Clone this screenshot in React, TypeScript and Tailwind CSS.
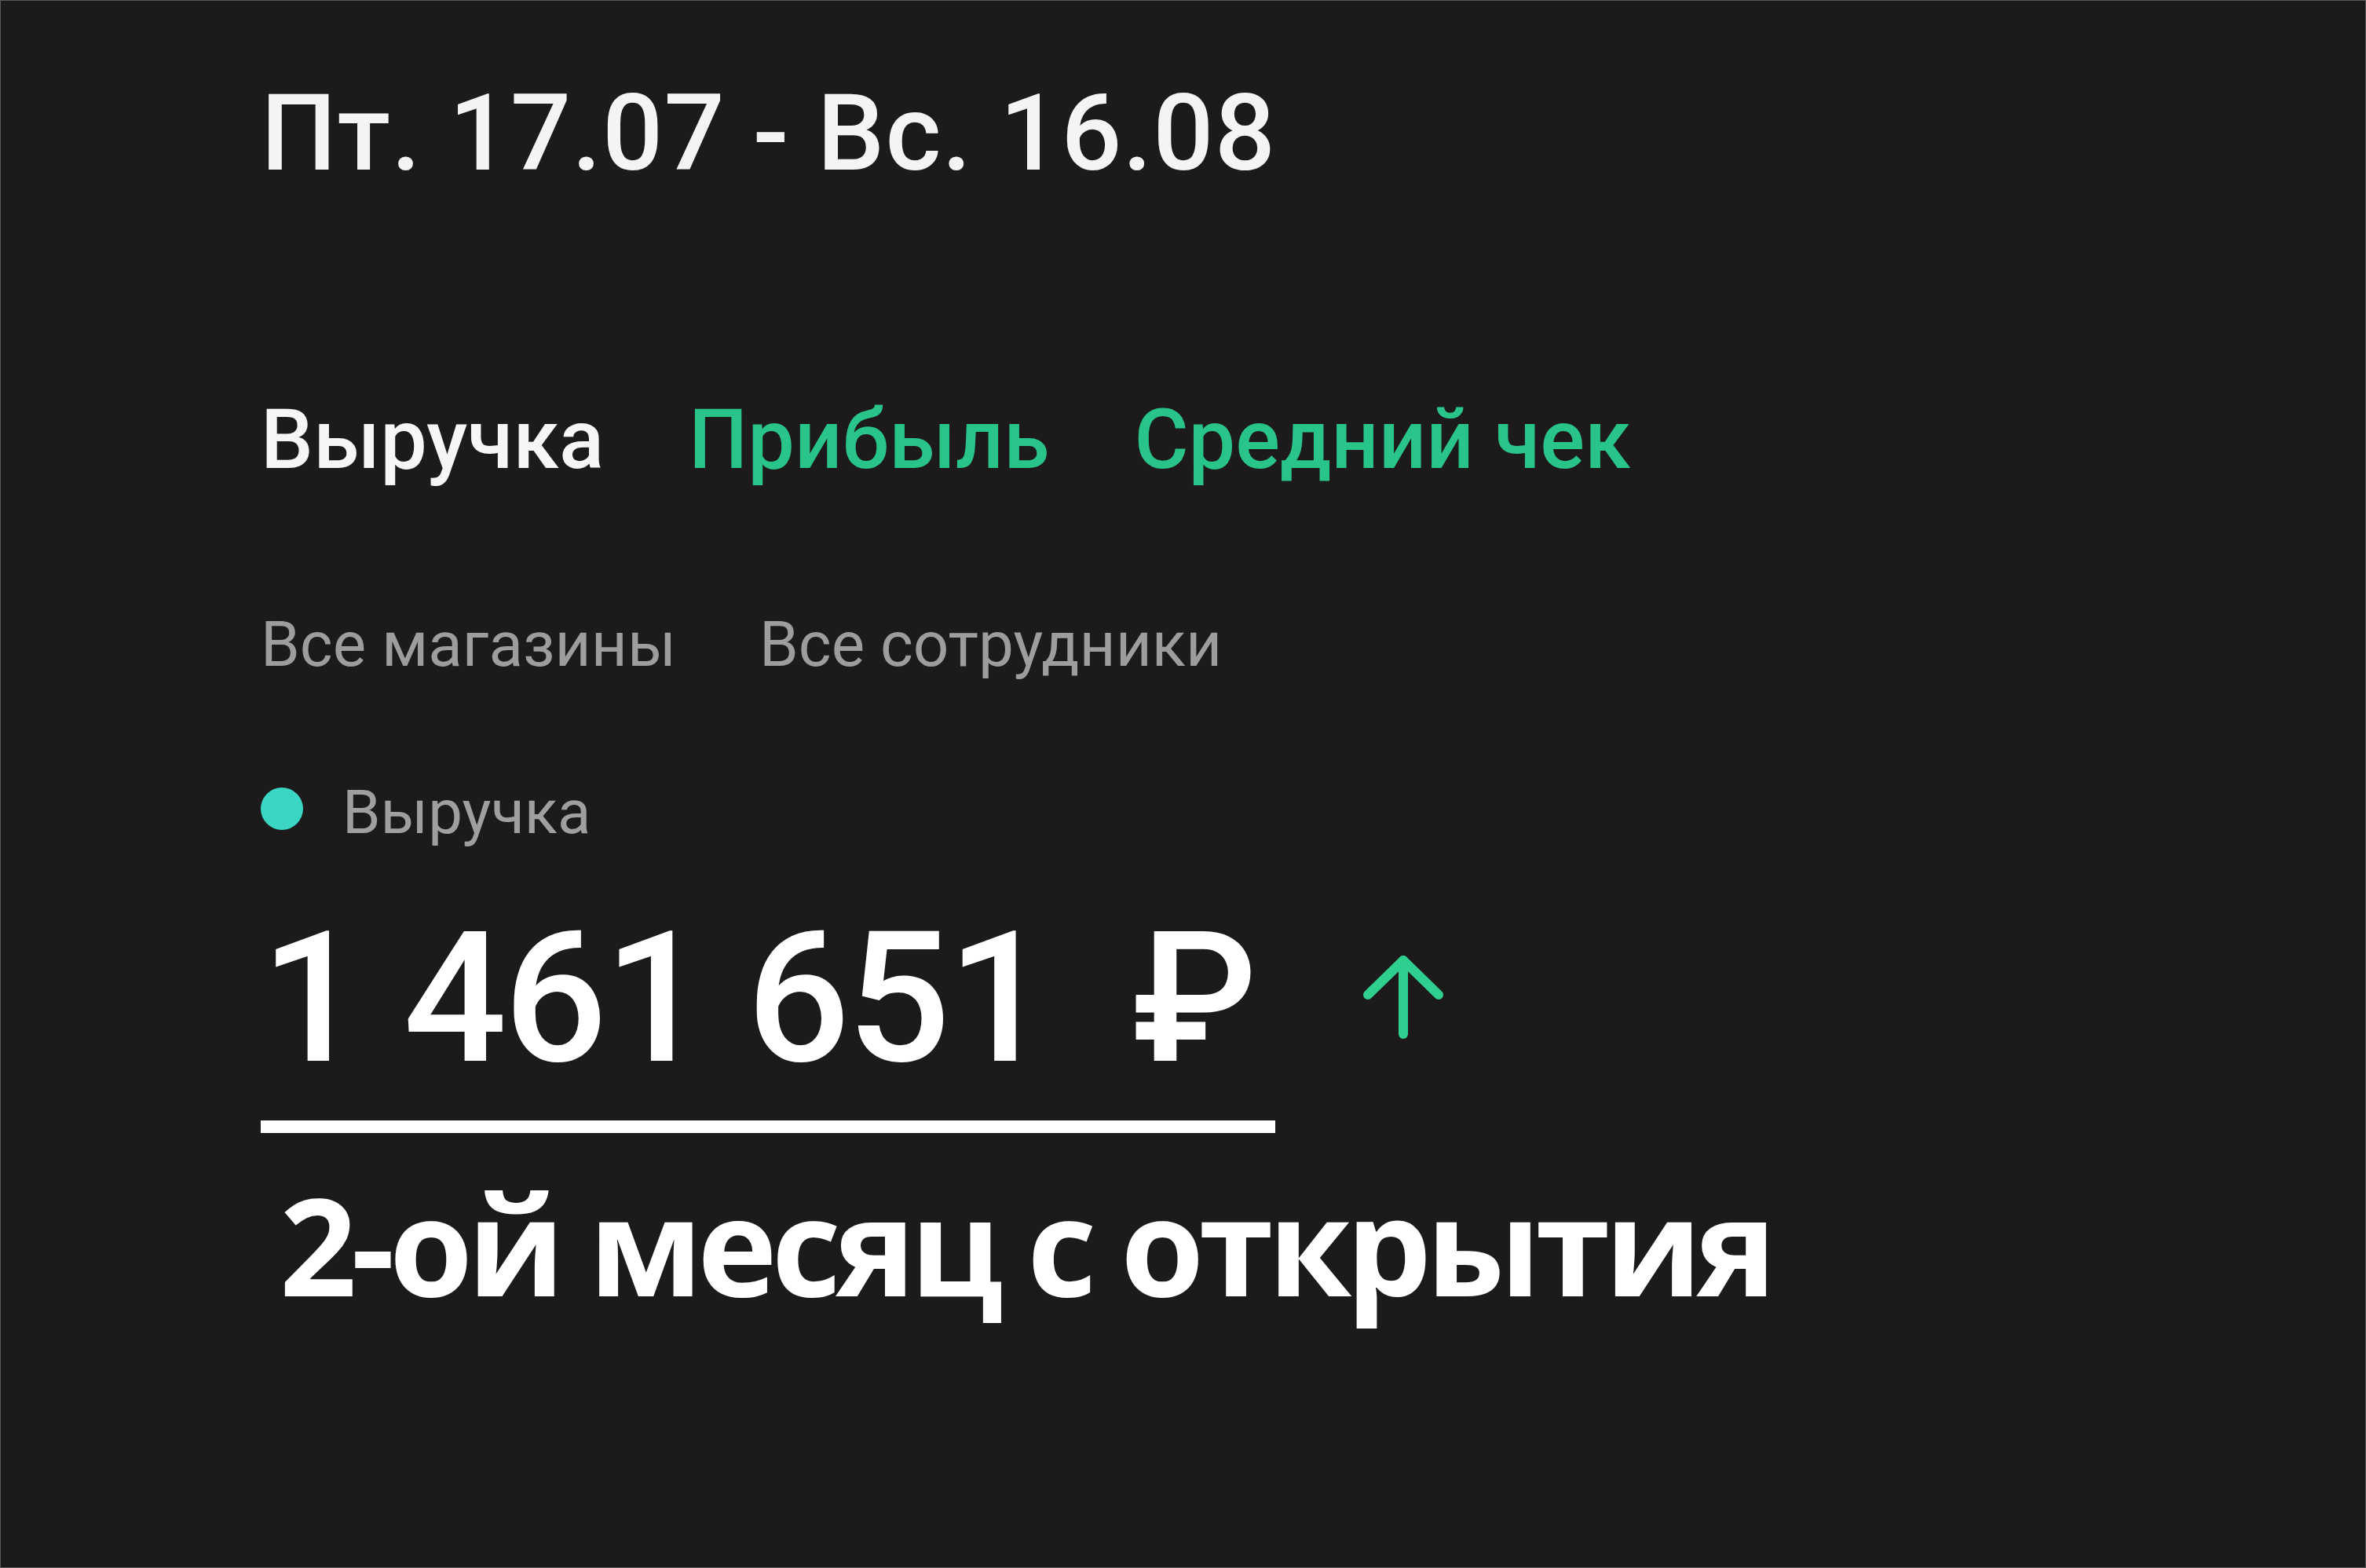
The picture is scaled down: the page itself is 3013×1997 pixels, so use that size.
import React from "react";

export default function App() {
  return (
    <div className="w-[3013px] h-[1997px] bg-[#1c1a1b] border border-[#5a5a5a] box-border overflow-hidden">
      <div className="flex flex-col pl-[331px] pt-[101px]">
        <div
          className="text-[136px] leading-none text-[#f4f4f4] font-medium tracking-[1px] whitespace-nowrap"
          style={{ fontFamily: "Roboto, 'Liberation Sans', sans-serif" }}
        >
          Пт. 17.07 - Вс. 16.08
        </div>

        <div
          className="mt-[269px] flex gap-[108px] text-[106px] leading-none font-medium whitespace-nowrap"
          style={{ fontFamily: "Roboto, 'Liberation Sans', sans-serif" }}
        >
          <span className="text-[#f6f6f6]">Выручка</span>
          <span className="text-[#29c48a]">Прибыль</span>
          <span className="text-[#29c48a]">Средний чек</span>
        </div>

        <div
          className="mt-[168px] flex gap-[106px] text-[80px] leading-none text-[#9d9d9d] whitespace-nowrap"
          style={{ fontFamily: "Roboto, 'Liberation Sans', sans-serif" }}
        >
          <span>Все магазины</span>
          <span>Все сотрудники</span>
        </div>

        <div
          className="mt-[135px] flex items-start gap-[50px] text-[78px] leading-none text-[#9f9f9f] whitespace-nowrap"
          style={{ fontFamily: "Roboto, 'Liberation Sans', sans-serif" }}
        >
          <span className="mt-[7px] w-[54px] h-[54px] rounded-full bg-[#3bd6c3] shrink-0" />
          <span>Выручка</span>
        </div>

        <div className="mt-[82px] flex items-center w-[1292px]">
          <span
            className="text-[232px] leading-none text-white font-medium tracking-[-4px] whitespace-nowrap"
            style={{ fontFamily: "Roboto, 'Liberation Sans', sans-serif" }}
          >
            1 461 651{"\u00a0\u00a0"}₽
          </span>
          <svg
            className="ml-[135px] shrink-0"
            width="110"
            height="110"
            viewBox="0 0 110 110"
            fill="none"
            stroke="#2ecf8f"
            strokeWidth="12"
            strokeLinecap="round"
            strokeLinejoin="round"
          >
            <path d="M55 6 V100" />
            <path d="M10 50 L55 6 L100 50" />
          </svg>
        </div>

        <div className="mt-[39px] w-[1292px] h-[16px] bg-white" />

        <div
          className="mt-[55px] pl-[24px] text-[172px] leading-none font-bold text-white tracking-[-7px] whitespace-nowrap"
          style={{ fontFamily: "'Open Sans', 'Noto Sans', sans-serif" }}
        >
          2-ой месяц с открытия
        </div>
      </div>
    </div>
  );
}
